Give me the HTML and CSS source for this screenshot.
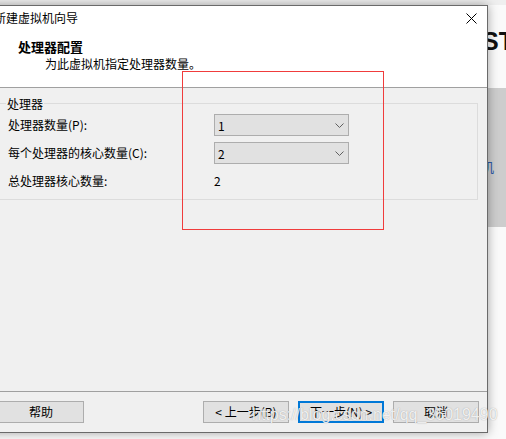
FILE: index.html
```html
<!DOCTYPE html>
<html lang="zh-CN">
<head>
<meta charset="utf-8">
<title>新建虚拟机向导</title>
<link rel="stylesheet" href="styles.css">
</head>
<body>
  <div class="desktop">
    <div class="bg-title">ST</div>
    <div class="bg-band"><span class="bg-link">机</span></div>

    <div class="dialog">
      <div class="header">
        <div class="titlebar">
          <span class="title">新建虚拟机向导</span>
          <svg class="close" width="11" height="11" viewBox="0 0 11 11"><path d="M0.5 0.5 L10.5 10.5 M10.5 0.5 L0.5 10.5" stroke="#000" stroke-width="1" fill="none"/></svg>
        </div>
        <div class="heading">处理器配置</div>
        <div class="subheading">为此虚拟机指定处理器数量。</div>
      </div>

      <div class="body">
        <div class="group">
          <span class="group-label">处理器</span>
          <div class="grid">
            <span class="label">处理器数量(P):</span>
            <div class="combo"><span>1</span><svg width="9" height="5" viewBox="0 0 9 5"><path d="M0.5 0.5 L4.5 4.5 L8.5 0.5" stroke="#606060" fill="none"/></svg></div>
            <span class="label">每个处理器的核心数量(C):</span>
            <div class="combo"><span>2</span><svg width="9" height="5" viewBox="0 0 9 5"><path d="M0.5 0.5 L4.5 4.5 L8.5 0.5" stroke="#606060" fill="none"/></svg></div>
            <span class="label">总处理器核心数量:</span>
            <span class="value">2</span>
          </div>
        </div>
      </div>

      <div class="footer">
        <button class="btn">帮助</button>
        <div class="spacer"></div>
        <button class="btn">&lt; 上一步(B)</button>
        <button class="btn btn-default">下一步(N) &gt;</button>
        <button class="btn">取消</button>
      </div>
    </div>

    <div class="annotation"></div>
    <div class="watermark">https://blog.csdn.net/qq_36019490</div>
  </div>
</body>
</html>
```

FILE: styles.css
```css
* { box-sizing: border-box; }

html, body {
  margin: 0;
  padding: 0;
}

body {
  width: 506px;
  height: 439px;
  overflow: hidden;
  background: #f4f4f4;
  font-family: "Noto Sans CJK SC", "Noto Sans", sans-serif;
  font-size: 12px;
  color: #000;
}

.desktop {
  position: relative;
  width: 506px;
  height: 439px;
  overflow: hidden;
  background: linear-gradient(to bottom, #efefef 0, #efefef 5px, #fafafa 5px);
}

.bg-title {
  position: absolute;
  left: 482px;
  top: 24px;
  font-family: "Liberation Sans", Arial, sans-serif;
  font-weight: bold;
  font-size: 25px;
  line-height: 34px;
  color: #111;
}

.bg-band {
  position: absolute;
  left: 470px;
  top: 88px;
  width: 40px;
  height: 139px;
  background: #cdcdcd;
}

.bg-link {
  position: absolute;
  left: 11px;
  top: 71px;
  font-size: 13px;
  line-height: 16px;
  color: #2b58a8;
}

.dialog {
  position: absolute;
  left: -15px;
  top: 5px;
  width: 503px;
  height: 428px;
  border: 1px solid #6a6a6a;
  background: #f0f0f0;
  box-shadow: 0 0 10px rgba(0, 0, 0, 0.35);
  display: flex;
  flex-direction: column;
}

.header {
  height: 82px;
  background: #fff;
  border-bottom: 1px solid #a0a0a0;
  flex: none;
}

.titlebar {
  height: 23px;
  display: flex;
  align-items: center;
  justify-content: space-between;
  padding-left: 8px;
  padding-right: 10px;
}

.title {
  line-height: 23px;
  font-size: 12px;
}

.close {
  display: block;
  margin-top: 2px;
}

.heading {
  margin-top: 9px;
  padding-left: 32px;
  font-weight: bold;
  font-size: 13px;
  line-height: 17px;
}

.subheading {
  padding-left: 59px;
  line-height: 17px;
}

.body {
  flex: 1;
  padding: 15px 9px 0 9px;
  background: #f0f0f0;
}

.group {
  position: relative;
  border: 1px solid #dcdcdc;
  height: 97px;
  padding: 10px 0 0 12px;
}

.group-label {
  position: absolute;
  left: 10px;
  top: -9px;
  padding: 0 1px;
  line-height: 17px;
  background: #f0f0f0;
}

.grid {
  display: grid;
  grid-template-columns: 206px 135px;
  grid-auto-rows: 22px;
  row-gap: 6px;
  align-items: center;
}

.label, .value {
  line-height: 22px;
}

.value {
  padding-left: 0;
}

.combo {
  height: 22px;
  background: #e1e1e1;
  border: 1px solid #adadad;
  display: flex;
  align-items: center;
  justify-content: space-between;
  padding: 0 4px 0 3px;
}

.combo svg {
  display: block;
}

.footer {
  height: 41px;
  flex: none;
  border-top: 1px solid #a0a0a0;
  display: flex;
  align-items: flex-start;
  padding: 9px 8px 0 12px;
  gap: 9px;
}

.spacer {
  flex: 1;
}

.btn {
  width: 86px;
  height: 22px;
  margin: 0;
  padding: 0;
  background: #e1e1e1;
  border: 1px solid #adadad;
  font-family: "Noto Sans CJK SC", "Noto Sans", sans-serif;
  font-size: 12px;
  line-height: 20px;
  color: #000;
}

.btn-default {
  border-color: #0078d7;
  box-shadow: inset 0 0 0 1px #0078d7;
}

.annotation {
  position: absolute;
  left: 182px;
  top: 71px;
  width: 202px;
  height: 159px;
  border: 1px solid #f03c3c;
}

.watermark {
  position: absolute;
  left: 252px;
  top: 405px;
  font-family: "Liberation Sans", Arial, sans-serif;
  font-size: 16px;
  line-height: 20px;
  color: rgba(255, 255, 255, 0.85);
  text-shadow: 0 0 1px rgba(90, 90, 90, 0.55);
  white-space: nowrap;
}
```
